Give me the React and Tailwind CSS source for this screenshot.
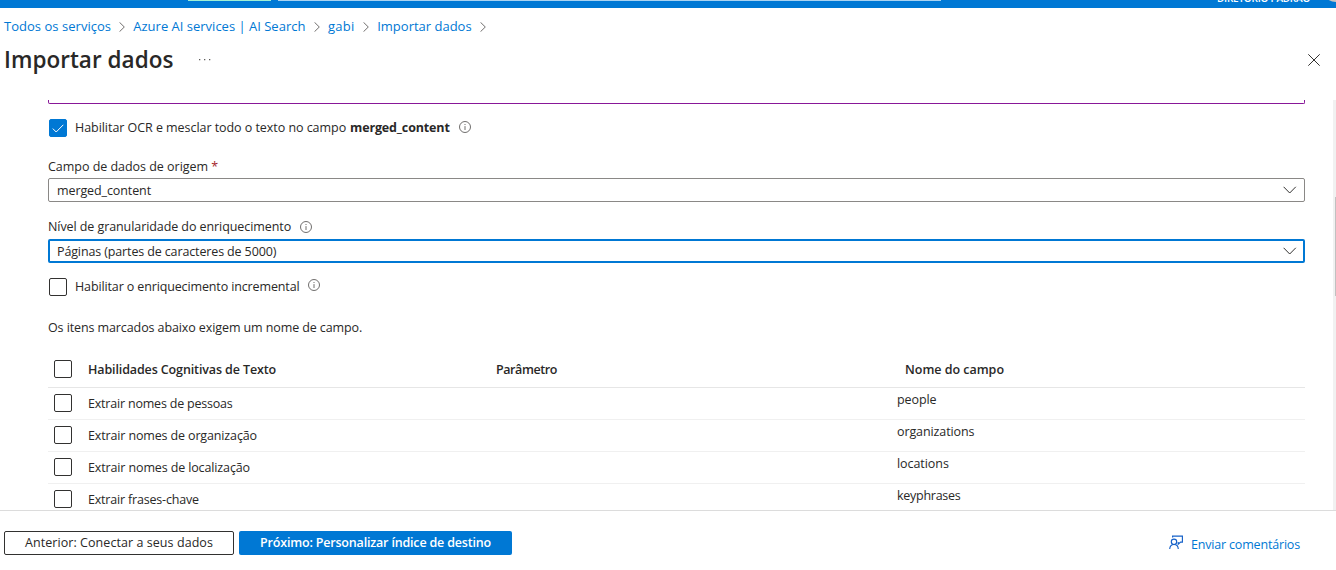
function Info({ className = "" }) {
  return (
    <svg className={`h-3 w-3 shrink-0 ${className}`} viewBox="0 0 12 12" fill="none" stroke="#605e5c" strokeWidth="0.9">
      <circle cx="6" cy="6" r="5.5" />
      <path d="M6 5.1V9M6 3v1" />
    </svg>
  );
}

function Chevron() {
  return (
    <svg className="h-2 w-[14px] shrink-0" viewBox="0 0 14 8" fill="none" stroke="#323130" strokeWidth="1">
      <path d="M.6.8 6.7 7 12.8.8" />
    </svg>
  );
}

function Separator() {
  return (
    <svg className="mt-0.5 h-[10px] w-[6px] shrink-0" viewBox="0 0 6 10" fill="none" stroke="#605e5c" strokeWidth="0.9">
      <path d="M.5.3 5.3 5 .5 9.7" />
    </svg>
  );
}

function Checkbox({ checked = false, className = "" }) {
  return (
    <span
      className={`flex h-[18px] w-[18px] shrink-0 items-center justify-center rounded-[2px] border ${
        checked ? "border-[#0078d4] bg-[#0078d4]" : "border-[#323130] bg-white"
      } ${className}`}
    >
      {checked && (
        <svg className="h-[9px] w-3" viewBox="0 0 12 9" fill="none" stroke="#fff" strokeWidth="1">
          <path d="M.8 4.6 4.2 8 11.3.8" />
        </svg>
      )}
    </span>
  );
}

const crumbs = [
  { label: "Todos os serviços", style: "w-[107px] tracking-[0.03px]" },
  { label: "Azure AI services | AI Search", style: "w-[172.3px]" },
  { label: "gabi", style: "w-[27px] tracking-[0.3px]" },
  { label: "Importar dados", style: "w-[95px]" },
];

const rows = [
  { skill: "Extrair nomes de pessoas", skillStyle: "tracking-[-0.2px]", field: "people", fieldStyle: "tracking-[-0.1px]" },
  { skill: "Extrair nomes de organização", skillStyle: "tracking-[-0.14px]", field: "organizations", fieldStyle: "tracking-[-0.1px]" },
  { skill: "Extrair nomes de localização", skillStyle: "tracking-[-0.13px]", field: "locations", fieldStyle: "tracking-[-0.06px]" },
  { skill: "Extrair frases-chave", skillStyle: "tracking-[-0.19px]", field: "keyphrases", fieldStyle: "tracking-[-0.27px]" },
];

export default function App() {
  return (
    <div className="flex h-[570px] w-[1336px] flex-col overflow-hidden whitespace-nowrap bg-white font-['Open_Sans','Noto_Sans',sans-serif] text-[12.5px] leading-[18px] text-[#292827]">
      <header className="flex h-2 shrink-0 items-start overflow-hidden bg-[#0078d4]">
        <div className="ml-[188px] h-px w-[83px] bg-[#9ff0d6]" />
        <div className="ml-[7px] h-px w-[663px] bg-[#a9d3f2]" />
        <div className="-mt-[9px] ml-auto h-[14px] w-[93px] text-[10px] leading-[14px] font-semibold tracking-[-0.23px] text-white">
          DIRETÓRIO PADRÃO
        </div>
        <div className="-mt-[26px] ml-3 h-7 w-[14px] overflow-hidden">
          <div className="h-7 w-7 rounded-full bg-[#c8c6c4]" />
        </div>
      </header>

      <nav className="mt-[9px] flex h-[18px] shrink-0 items-center pl-1 text-[13px] text-[#0078d4]">
        {crumbs.map((c, i) => (
          <div key={i} className="flex items-center">
            <a className={c.style}>{c.label}</a>
            <span className="flex w-[22.3px] justify-center">
              <Separator />
            </span>
          </div>
        ))}
      </nav>

      <div className="mt-[9px] flex h-8 shrink-0 items-center pr-4 pl-1">
        <h1 className="w-[195px] text-[22.5px] leading-8 font-semibold tracking-[0.03px]">Importar dados</h1>
        <svg className="h-[2px] w-3" viewBox="0 0 12 2" fill="#605e5c">
          <path d="M0 0h1.3v1.3H0zM5 0h1.3v1.3H5zM10 0h1.3v1.3H10z" />
        </svg>
        <svg className="ml-auto h-3 w-3" viewBox="0 0 12 12" fill="none" stroke="#323130" strokeWidth="1">
          <path d="m.3.3 11.4 11.4M11.7.3.3 11.7" />
        </svg>
      </div>

      <div className="mt-6 flex h-[410px] shrink-0 overflow-hidden">
        <main className="ml-12 w-[1257px]">
          <div className="h-1 rounded-b-[2px] border-x border-b border-[#881798]" />

          <div className="mt-[14px] flex h-5 items-center pl-px">
            <Checkbox checked />
            <span className="ml-2 w-[275px] tracking-[-0.05px]">Habilitar OCR e mesclar todo o texto no campo</span>
            <b className="w-[109px] font-bold tracking-[-0.14px]">merged_content</b>
            <Info className="-mt-0.5" />
          </div>

          <div className="mt-5 h-[18px] tracking-[-0.03px]">
            Campo de dados de origem <span className="text-[#a4262c]">*</span>
          </div>
          <div className="mt-0.5 flex h-6 items-center justify-between rounded-[2px] border border-[#8a8886] pr-[7px] pl-2">
            <span className="mt-0.5 tracking-[-0.1px]">merged_content</span>
            <Chevron />
          </div>

          <div className="mt-4 flex h-[18px] items-center">
            <span className="w-[252px] tracking-[-0.08px]">Nível de granularidade do enriquecimento</span>
            <Info />
          </div>
          <div className="mt-[3px] flex h-6 items-center justify-between rounded-[2px] border-2 border-[#0078d4] pr-[6px] pl-[7px]">
            <span className="mt-0.5 tracking-[-0.13px]">Páginas (partes de caracteres de 5000)</span>
            <Chevron />
          </div>

          <div className="mt-[14px] flex h-5 items-center pl-px">
            <Checkbox />
            <span className="ml-2 w-[233px] tracking-[-0.13px]">Habilitar o enriquecimento incremental</span>
            <Info className="-mt-1" />
          </div>

          <p className="mt-[22px] h-[18px] tracking-[-0.1px]">Os itens marcados abaixo exigem um nome de campo.</p>

          <div className="mt-[15px] flex h-9 items-center border-b border-[#e6e6e6] font-semibold">
            <Checkbox className="mb-0.5 ml-1.5" />
            <span className="ml-4 w-[408px] tracking-[-0.12px]">Habilidades Cognitivas de Texto</span>
            <span className="w-[409px] tracking-[-0.42px]">Parâmetro</span>
            <span className="tracking-[-0.02px]">Nome do campo</span>
          </div>
          {rows.map((r) => (
            <div key={r.field} className="flex h-8 items-center border-b border-[#f0f0f0]">
              <Checkbox className="mb-0.5 ml-1.5" />
              <span className={`ml-4 w-[809px] ${r.skillStyle}`}>{r.skill}</span>
              <span className={`mb-2 ${r.fieldStyle}`}>{r.field}</span>
            </div>
          ))}
        </main>
        <div className="ml-auto flex h-full w-[3px] justify-end bg-[#f1f1f1]">
          <div className="mt-[97px] h-[99px] w-px bg-[#c1c1c1]" />
        </div>
      </div>

      <footer className="flex h-[60px] shrink-0 items-start border-t border-[#dcdcdc] pt-5 pl-1">
        <button className="h-6 w-[230px] rounded-[2px] border border-[#323130] pb-px text-[12.5px] leading-[21px] tracking-[0.06px]">
          Anterior: Conectar a seus dados
        </button>
        <button className="ml-[5px] h-6 w-[273px] rounded-[2px] bg-[#0078d4] pb-px text-[12.5px] leading-[23px] font-semibold tracking-[-0.18px] text-white">
          Próximo: Personalizar índice de destino
        </button>
        <a className="mt-[3px] mr-9 ml-auto flex text-[#0078d4]">
          <svg className="mt-px h-[15px] w-[15px]" viewBox="0 0 15 15" fill="none" stroke="#1460c8" strokeWidth="1.15">
            <circle cx="5" cy="6.8" r="2.7" />
            <path d="M.7 14c.2-2.7 1.9-4.5 4.3-4.5s4.1 1.8 4.3 4.5M3.6 2.6V1.1h9.8v6h-1.8L9.2 9.2V7.1" />
          </svg>
          <span className="mt-0.5 ml-[7px] w-[109px] tracking-[-0.18px]">Enviar comentários</span>
        </a>
      </footer>
    </div>
  );
}
